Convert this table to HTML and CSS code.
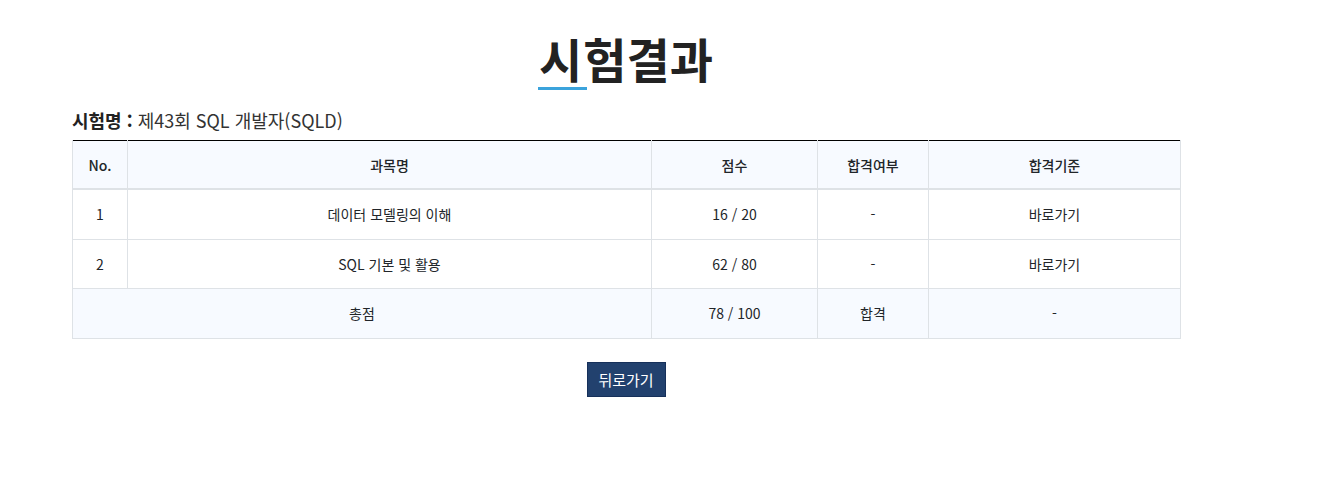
FILE: index.html
```html
<!DOCTYPE html>
<html lang="ko">
<head>
<meta charset="utf-8">
<link rel="stylesheet" href="styles.css">
<title>시험결과</title>
</head>
<body>
<div class="page">
  <h1 class="title"><span class="first">시</span>험결과</h1>
  <div class="exam-name"><strong>시험명 :</strong> 제43회 SQL 개발자(SQLD)</div>
  <table class="result">
    <colgroup>
      <col class="c1"><col class="c2"><col class="c3"><col class="c4"><col class="c5">
    </colgroup>
    <thead>
      <tr><th>No.</th><th>과목명</th><th>점수</th><th>합격여부</th><th>합격기준</th></tr>
    </thead>
    <tbody>
      <tr><td>1</td><td>데이터 모델링의 이해</td><td>16 / 20</td><td>-</td><td>바로가기</td></tr>
      <tr><td>2</td><td>SQL 기본 및 활용</td><td>62 / 80</td><td>-</td><td>바로가기</td></tr>
      <tr class="total"><td colspan="2">총점</td><td>78 / 100</td><td>합격</td><td>-</td></tr>
    </tbody>
  </table>
  <div class="actions"><button class="back">뒤로가기</button></div>
</div>
</body>
</html>
```
FILE: styles.css
```css
html, body { margin: 0; padding: 0; background: #fff; }
body {
  font-family: "Noto Sans CJK KR", "Noto Sans", sans-serif;
  color: #212529;
}
.page {
  width: 1108px;
  margin-left: 72px;
  padding-top: 25px;
}
.title {
  margin: 0;
  text-align: center;
  font-size: 47px;
  font-weight: 700;
  line-height: 66px;
  color: #222;
  letter-spacing: 0;
}
.title .first {
  display: inline-block;
  line-height: 59px;
  padding: 0 5px 0 1px;
  margin: 0 -4px 0 -1px;
  border-bottom: 3px solid #3ba3dc;
}
.exam-name {
  margin-top: 17px;
  font-size: 18px;
  line-height: 24px;
  color: #333;
}
.exam-name strong { font-weight: 700; color: #222; }
.result {
  margin-top: 8px;
  width: 1108px;
  border-collapse: collapse;
  border-top: 1px solid #000;
  font-size: 14px;
  table-layout: fixed;
}
.c1 { width: 55px; }
.c2 { width: 524px; }
.c3 { width: 166px; }
.c4 { width: 111px; }
.c5 { width: 252px; }
.result th, .result td {
  border: 1px solid #dee2e6;
  text-align: center;
  height: 48.5px;
  padding: 0;
  font-weight: 400;
  color: #212529;
}
.result th {
  height: 47px;
  background: #f7faff;
  font-weight: 500;
  border-bottom: 2px solid #dee2e6;
  border-top: 0;
}
.result tr.total td { background: #f7faff; }
.actions {
  text-align: center;
  margin-top: 23px;
}
.back {
  font-family: inherit;
  font-size: 15px;
  color: #fff;
  background: #22416e;
  border: 1px solid #16305a;
  width: 79px;
  height: 35px;
  padding: 0;
  cursor: pointer;
}
```
